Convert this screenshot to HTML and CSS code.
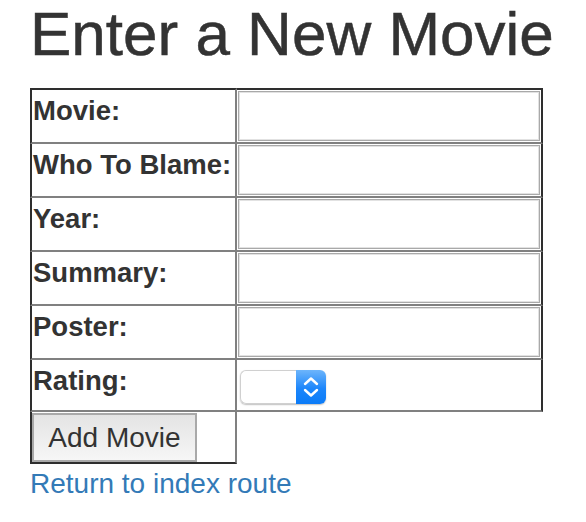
FILE: index.html
```html
<!DOCTYPE html>
<html>
<head>
<meta charset="utf-8">
<title>Enter a New Movie</title>
<link rel="stylesheet" href="styles.css">
</head>
<body>
<div class="container">
  <h1 class="title">Enter a New Movie</h1>
  <form class="movie-form">
    <table class="form-table">
      <tr class="row-first">
        <td class="cell-label"><label>Movie:</label></td>
        <td class="cell-field"><input type="text" class="field"></td>
      </tr>
      <tr>
        <td class="cell-label"><label>Who To Blame:</label></td>
        <td class="cell-field"><input type="text" class="field"></td>
      </tr>
      <tr>
        <td class="cell-label"><label>Year:</label></td>
        <td class="cell-field"><input type="text" class="field"></td>
      </tr>
      <tr>
        <td class="cell-label"><label>Summary:</label></td>
        <td class="cell-field"><input type="text" class="field"></td>
      </tr>
      <tr>
        <td class="cell-label"><label>Poster:</label></td>
        <td class="cell-field"><input type="text" class="field"></td>
      </tr>
      <tr class="row-rating">
        <td class="cell-label"><label>Rating:</label></td>
        <td class="cell-field cell-select">
          <span class="select-wrap">
            <select class="select"><option></option></select>
            <span class="select-arrows">
              <svg width="16" height="22" viewBox="0 0 16 22"><path d="M2 8 L8 2.5 L14 8" fill="none" stroke="#fff" stroke-width="2.4" stroke-linecap="round" stroke-linejoin="round"/><path d="M2 14 L8 19.5 L14 14" fill="none" stroke="#fff" stroke-width="2.4" stroke-linecap="round" stroke-linejoin="round"/></svg>
            </span>
          </span>
        </td>
      </tr>
      <tr class="row-last">
        <td class="cell-button"><button type="button" class="btn">Add Movie</button></td>
      </tr>
    </table>
  </form>
  <a class="back-link" href="#">Return to index route</a>
</div>
</body>
</html>
```
FILE: styles.css
```css
html, body {
  margin: 0;
  padding: 0;
  background: #fff;
}
body {
  font-family: "Liberation Sans", Arial, Helvetica, sans-serif;
  font-size: 28px;
  line-height: 40px;
  color: #333;
}
.container {
  padding: 0 30px;
}
.title {
  margin: 0 0 21px;
  font-size: 62px;
  line-height: 67px;
  font-weight: normal;
  color: #333;
  -webkit-text-stroke: 0.5px #333;
}
.movie-form {
  margin: 0;
}
.form-table {
  border-collapse: separate;
  border-spacing: 0;
}
.form-table td {
  padding: 1px;
  border-bottom: 2px solid #808080;
}
.cell-label {
  width: 201px;
  vertical-align: top;
  border-left: 2px solid #2e2e2e;
  border-right: 2px solid #808080;
}
.cell-label label {
  display: block;
  font-size: 27.5px;
  font-weight: bold;
  margin-bottom: 10px;
  white-space: nowrap;
}
.row-rating .cell-label label {
  margin-bottom: 8px;
}
.cell-field {
  border-right: 2px solid #2e2e2e;
  vertical-align: middle;
}
.row-first td {
  border-top: 2px solid #2e2e2e;
}
.field {
  display: block;
  box-sizing: border-box;
  width: 302px;
  height: 50px;
  margin: 0;
  padding: 0 4px;
  border: 1px solid #a9a9a9;
  box-shadow: inset 0 0 0 1px #e2e2e2;
  background: #fff;
  font: inherit;
  outline: none;
}
.cell-select {
  padding-left: 3px !important;
}
.select-wrap {
  display: inline-flex;
  vertical-align: middle;
  height: 34px;
  border-radius: 6px;
  box-shadow: 0 1px 1.5px rgba(0, 0, 0, 0.25);
}
.select {
  -webkit-appearance: none;
  appearance: none;
  box-sizing: border-box;
  width: 56px;
  height: 34px;
  margin: 0;
  padding: 0;
  border: 1px solid #d0d0d0;
  border-right: none;
  border-radius: 6px 0 0 6px;
  background: #fff;
  font: inherit;
  outline: none;
}
.select-arrows {
  display: flex;
  align-items: center;
  justify-content: center;
  width: 30px;
  height: 34px;
  border-radius: 0 6px 6px 0;
  background: linear-gradient(#6db5fb, #1c86fb 55%, #0b7bf7);
}
.row-last td {
  border-bottom: 2px solid #2e2e2e;
}
.cell-button {
  padding: 1px 0 0 0 !important;
  border-left: 2px solid #2e2e2e;
  border-right: 2px solid #808080;
}
.btn {
  display: block;
  box-sizing: border-box;
  width: 165px;
  height: 49px;
  margin: 0;
  padding: 0 14px;
  border: 2px solid #a9a9a9;
  background: linear-gradient(#e4e4e4, #f6f6f6);
  color: #333;
  font-family: inherit;
  font-size: 28px;
  line-height: 40px;
  text-align: center;
}
.back-link {
  display: inline-block;
  color: #337ab7;
  text-decoration: none;
  font-size: 28px;
  line-height: 40px;
}
```
